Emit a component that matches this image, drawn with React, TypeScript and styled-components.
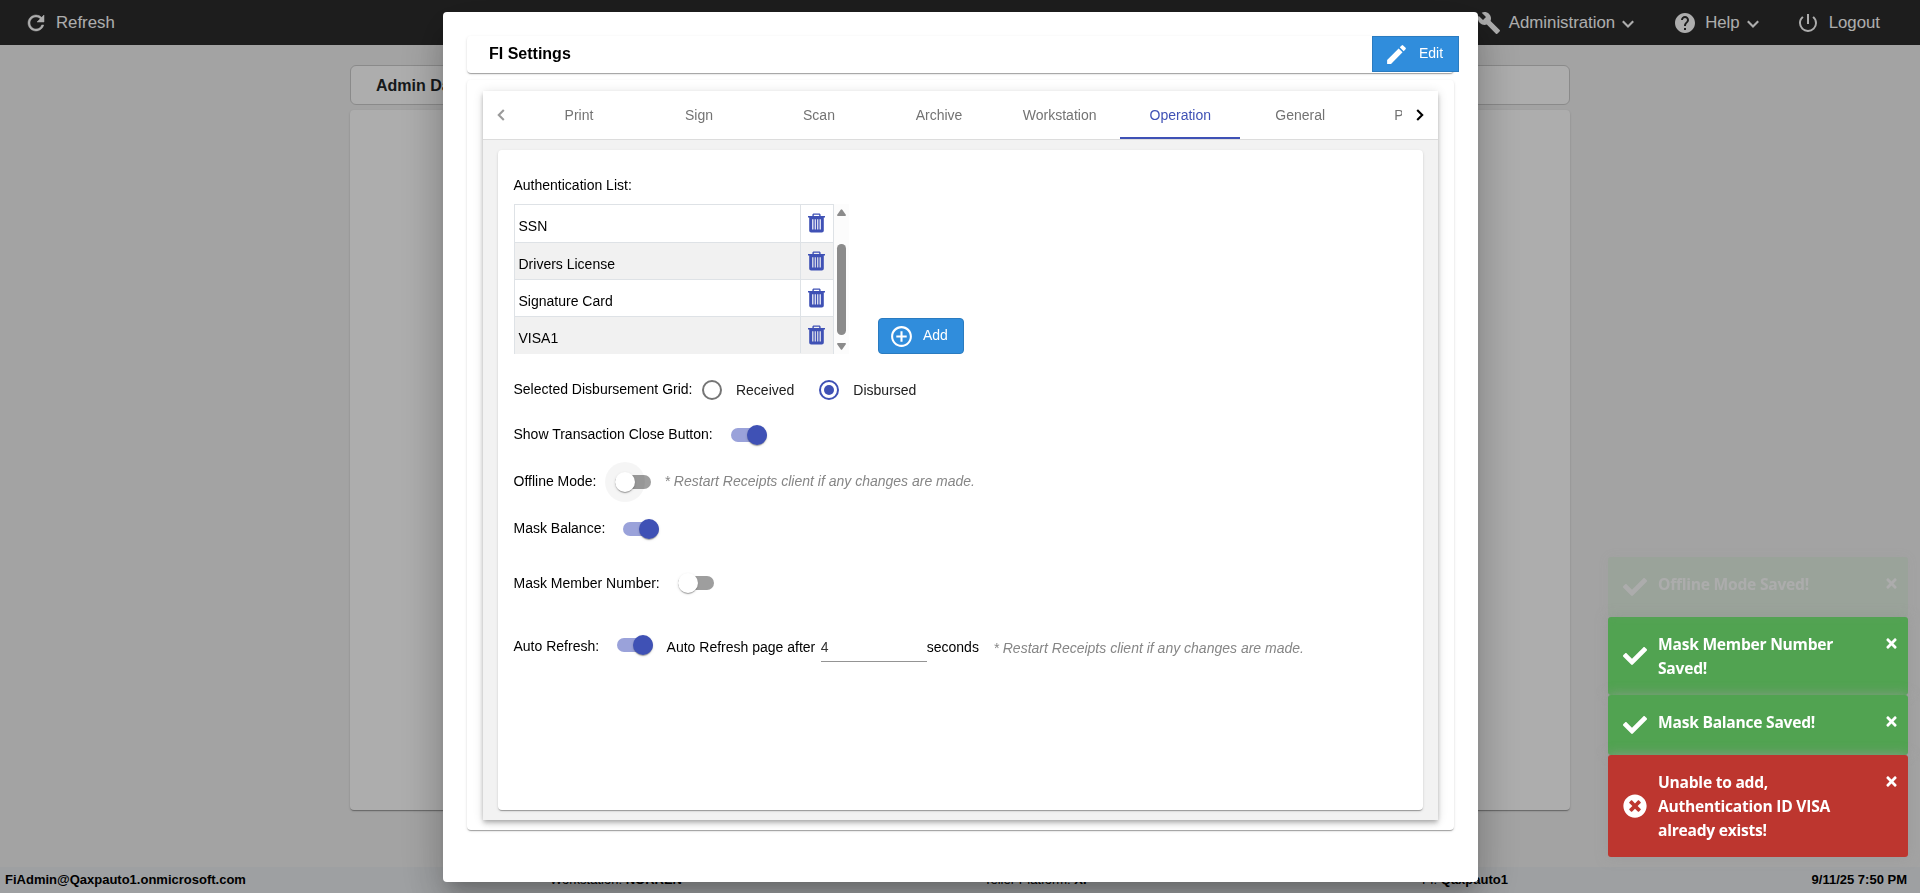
import React from 'react';
import styled, { createGlobalStyle, css } from 'styled-components';
import { FaCheck, FaTimes, FaTimesCircle } from 'react-icons/fa';
import {
  MdAddCircleOutline,
  MdBuild,
  MdEdit,
  MdHelp,
  MdPowerSettingsNew,
  MdRefresh,
} from 'react-icons/md';

const Colors = {
  bar: '#2c2c2c',
  page: '#f1f1f1',
  primary: '#3f51b5',
  button: '#308ddc',
  buttonBorder: '#2a7bc0',
  tableBorder: '#dee2e6',
  success: '#51a351',
  error: '#bd362f',
  hint: '#868686',
};

const cardShadow = css`
  box-shadow: 0 2px 1px -1px rgba(0, 0, 0, 0.2), 0 1px 1px 0 rgba(0, 0, 0, 0.14),
    0 1px 3px 0 rgba(0, 0, 0, 0.12);
`;

const GlobalStyle = createGlobalStyle`
  * {
    box-sizing: border-box;
  }
  body {
    margin: 0;
    overflow: hidden;
    font-family: Arial, 'Liberation Sans', sans-serif;
    font-size: 14px;
    color: #000;
  }
  svg {
    display: block;
    flex: none;
  }
`;

const Page = styled.div`
  display: flex;
  flex-direction: column;
  height: 100vh;
  background: ${Colors.page};
`;

const TopBar = styled.nav`
  display: flex;
  align-items: center;
  flex: none;
  height: 45px;
  padding: 0 40px 0 24px;
  background: ${Colors.bar};
  color: #fff;
  font-size: 16.8px;
`;

const NavItem = styled.div<{ $gap: number; $right?: number }>`
  display: flex;
  align-items: center;
  gap: ${({ $gap }) => $gap}px;
  margin-right: ${({ $right }) => $right || 0}px;
`;

const RefreshIcon = styled(MdRefresh)`
  stroke: none;

  path:last-child {
    stroke: currentColor;
    stroke-width: 0.5px;
  }
`;

const Spacer = styled.div`
  flex: 1;
`;

const NavChevron = styled.svg`
  width: 12px;
  height: 8px;
  margin: 2px 0 0 -1px;
`;

const Main = styled.main`
  display: flex;
  flex-direction: column;
  gap: 5px;
  flex: 1;
  width: 1220px;
  margin: 20px auto 57px;
`;

const PageTitle = styled.div`
  display: flex;
  align-items: center;
  height: 40px;
  padding: 2px 0 0 25px;
  border: 1px solid #ccc;
  border-radius: 6px;
  background: #fff;
  font-size: 16px;
  font-weight: bold;
  color: #212529;
`;

const PageCard = styled.div`
  flex: 1;
  border-radius: 4px;
  background: #fff;
  ${cardShadow}
`;

const Footer = styled.footer`
  display: grid;
  grid-template-columns: 545px 434px 438px 1fr auto;
  align-items: center;
  flex: none;
  height: 26px;
  padding: 0 13px 2px 5px;
  background: #e9ecef;
  font-size: 13px;
`;

const Overlay = styled.div`
  position: fixed;
  inset: 0;
  padding: 12px 0 0 443px;
  background: rgba(0, 0, 0, 0.32);
`;

const Dialog = styled.div`
  width: 1035px;
  height: 870px;
  padding: 24px;
  border-radius: 4px;
  background: #fff;
  box-shadow: 0 11px 15px -7px rgba(0, 0, 0, 0.2),
    0 24px 38px 3px rgba(0, 0, 0, 0.14), 0 9px 46px 8px rgba(0, 0, 0, 0.12);
`;

const DialogHeader = styled.div`
  display: flex;
  align-items: flex-start;
  justify-content: space-between;
  height: 37px;
  margin-bottom: 7px;
  padding-left: 22px;
  border-radius: 4px;
  ${cardShadow}
`;

const DialogTitle = styled.h1`
  margin: 0;
  font-size: 16px;
  line-height: 35px;
`;

const Button = styled.button<{ $square?: boolean }>`
  display: flex;
  align-items: center;
  height: 36px;
  padding: 0;
  border: 1px solid ${Colors.buttonBorder};
  border-radius: ${({ $square }) => ($square ? 0 : 4)}px;
  background: ${Colors.button};
  color: #fff;
  font-family: inherit;
  font-size: 14px;
`;

const EditButton = styled(Button)`
  width: 87px;
  margin-right: -5px;
  padding: 0 0 0 11px;
  gap: 10px;

  span {
    margin-bottom: 2px;
  }
`;

const AddButton = styled(Button)`
  width: 86px;
  padding-left: 10px;
  gap: 9px;

  span {
    margin-bottom: 3px;
  }
`;

const DialogBody = styled.div`
  height: 750px;
  padding: 11px 16px 10px;
  border-radius: 4px;
  ${cardShadow}
`;

const TabPanel = styled.div`
  height: 729px;
  background: #f2f2f2;
  box-shadow: 0 2px 4px -1px rgba(0, 0, 0, 0.2), 0 4px 5px 0 rgba(0, 0, 0, 0.14),
    0 1px 10px 0 rgba(0, 0, 0, 0.12);
`;

const TabHeader = styled.div`
  display: flex;
  height: 49px;
  border-bottom: 1px solid #dcdcdc;
  background: #fff;
`;

const Paginator = styled.div<{ $disabled?: boolean }>`
  display: flex;
  align-items: center;
  justify-content: center;
  flex: none;
  width: 36px;
  color: ${({ $disabled }) => ($disabled ? '#9a9a9a' : '#000')};
`;

const TabStrip = styled.div`
  display: flex;
  flex: 1;
  overflow: hidden;
`;

const Tab = styled.div<{ $active?: boolean }>`
  display: flex;
  align-items: center;
  justify-content: center;
  flex: none;
  min-width: 120px;
  height: 48px;
  padding: 2px 23.8px 0;
  border-bottom: 2px solid
    ${({ $active }) => ($active ? Colors.primary : 'transparent')};
  color: ${({ $active }) => ($active ? Colors.primary : '#737373')};
`;

const CutTab = styled(Tab)`
  justify-content: flex-start;
  padding: 2px 0 0 34px;
`;

const Card = styled.div`
  height: 660px;
  margin: 10px 15px;
  padding: 26px 15.5px;
  border-radius: 4px;
  background: #fff;
  ${cardShadow}
`;

const ListLabel = styled.div`
  height: 18px;
  margin-bottom: 10px;
  line-height: 18px;
`;

const ListArea = styled.div`
  display: flex;
  align-items: flex-end;
  gap: 29px;
  margin: 0 0 16px 0.5px;
`;

const ListScroller = styled.div`
  display: flex;
  width: 335px;
  height: 150px;
  overflow: hidden;
`;

const Table = styled.div`
  width: 320px;
  border: 1px solid ${Colors.tableBorder};
  border-bottom: none;
`;

const NameCell = styled.div`
  display: flex;
  align-items: flex-end;
  padding: 0 0 7px 3.5px;
  border-right: 1px solid ${Colors.tableBorder};
`;

const IconCell = styled.div`
  display: flex;
  justify-content: center;
  align-items: flex-end;
  padding: 0 1px 8px 0;
  color: ${Colors.primary};
`;

const TableRow = styled.div`
  display: grid;
  grid-template-columns: 1fr 32px;
  height: 37px;
  border-bottom: 1px solid ${Colors.tableBorder};

  &:first-child {
    height: 38px;
  }
  &:first-child ${NameCell} {
    padding-bottom: 8px;
  }
  &:first-child ${IconCell} {
    padding-bottom: 9px;
  }
  &:last-child {
    border-bottom-color: transparent;
  }
  &:nth-child(even) {
    background: #f1f1f1;
  }
`;

const ScrollTrack = styled.div`
  display: flex;
  flex-direction: column;
  align-items: center;
  justify-content: space-between;
  width: 15px;
  padding: 5px 0 4px;
  background: #fcfcfc;
`;

const ScrollThumb = styled.div`
  width: 9px;
  height: 91px;
  margin-top: 20px;
  border-radius: 5px;
  background: #8b8b8b;
`;

const Row = styled.div<{ $height?: number; $space: number }>`
  display: flex;
  align-items: center;
  height: ${({ $height }) => $height || 30}px;
  margin-bottom: ${({ $space }) => $space}px;
`;

const Label = styled.span<{ $gap?: number; $lift?: number }>`
  margin-right: ${({ $gap = 18 }) => $gap}px;
  margin-bottom: ${({ $lift = 3 }) => $lift}px;
  white-space: nowrap;
`;

const Radio = styled.span<{ $checked?: boolean }>`
  display: flex;
  align-items: center;
  justify-content: center;
  width: 20px;
  height: 20px;
  margin-right: 14px;
  border: 2px solid ${({ $checked }) => ($checked ? Colors.primary : '#757575')};
  border-radius: 50%;

  &::after {
    content: '';
    width: 10px;
    height: 10px;
    border-radius: 50%;
    background: ${({ $checked }) => ($checked ? Colors.primary : 'none')};
  }
`;

const RadioLabel = styled.span`
  margin-right: 25px;
  color: #212121;
`;

const Track = styled.span<{ $on?: boolean }>`
  display: flex;
  align-items: center;
  justify-content: ${({ $on }) => ($on ? 'flex-end' : 'flex-start')};
  flex: none;
  width: 36px;
  height: 14px;
  border-radius: 8px;
  background: ${({ $on }) => ($on ? '#9aa2da' : '#9e9e9e')};
`;

const Thumb = styled.span<{ $on?: boolean; $ripple?: boolean }>`
  flex: none;
  width: 20px;
  height: 20px;
  border-radius: 50%;
  background: ${({ $on }) => ($on ? Colors.primary : '#fff')};
  box-shadow: 0 2px 1px -1px rgba(0, 0, 0, 0.2), 0 1px 1px 0 rgba(0, 0, 0, 0.14),
    0 1px 3px 0 rgba(0, 0, 0, 0.12)
    ${({ $ripple }) => $ripple && ', 0 0 0 10px rgba(0, 0, 0, 0.04)'};
`;

const Hint = styled.span<{ $left: number; $drop?: number }>`
  margin-left: ${({ $left }) => $left}px;
  margin-top: ${({ $drop }) => $drop || 0}px;
  color: ${Colors.hint};
  font-style: italic;
  white-space: nowrap;
`;

const After = styled.span`
  margin: 4px 5.5px 0 14px;
`;

const SecondsInput = styled.input`
  width: 106px;
  height: 27px;
  margin-top: 6px;
  padding: 0 0 1px;
  border: none;
  border-bottom: 1px solid #949494;
  background: none;
  font: inherit;
  color: #333;
`;

const Unit = styled.span`
  margin-top: 4px;
`;

const ToastStack = styled.div`
  position: fixed;
  right: 12px;
  bottom: 36px;
  width: 300px;
`;

const ToastBox = styled.div<{ $error?: boolean; $fading?: boolean; $height: number }>`
  display: flex;
  height: ${({ $height }) => $height}px;
  padding: 15px 9px 15px 15px;
  border-radius: 3px;
  background: ${({ $error }) => ($error ? Colors.error : Colors.success)};
  opacity: ${({ $fading }) => ($fading ? 0.1 : 1)};
  box-shadow: 0 0 12px rgba(153, 153, 153, 0.8);
  color: #fff;
  font-family: 'Segoe UI', 'Open Sans', sans-serif;
  font-size: 15.6px;
  font-weight: bold;
  line-height: 24px;
`;

const ToastIcon = styled.div`
  display: flex;
  align-items: center;
  width: 35px;
  font-size: 24px;
`;

const ToastText = styled.div`
  flex: 1;
  padding-right: 40px;
  letter-spacing: -0.24px;
`;

const ToastClose = styled.div`
  padding-top: 4px;
  font-size: 15px;
`;

const Chevron = ({ flip = false }) => (
  <svg width="8" height="12" viewBox="0 0 8 12" fill="none" stroke="currentColor" strokeWidth="2.1">
    <path d={flip ? 'M1.2 1 6.2 6l-5 5' : 'M6.8 1 1.8 6l5 5'} />
  </svg>
);

const DownChevron = () => (
  <NavChevron viewBox="0 0 12 8" fill="none" stroke="currentColor" strokeWidth="2.1">
    <path d="m.8 1.2 5.2 5.2 5.2-5.2" />
  </NavChevron>
);

const TrashIcon = () => (
  <svg width="17" height="20" viewBox="0 0 17 20" fill="currentColor">
    <path
      fillRule="evenodd"
      d="M0 3h4.4V2C4.4 1 5 .5 5.900.5h5.200c.9 0 1.500.5 1.500 1.500v1H17v1.500h-1.200v13c0 1.200-.8 2-2 2H3.200c-1.200 0-2-.8-2-2v-13H0zM5.800 3h5.400V1.800H5.800zM4.200 6.300v10.200h1.200V6.300zm2.500 0v10.200h1.100V6.300zm2.500 0v10.200h1.100V6.300zm2.400 0v10.200h1.200V6.300z"
    />
  </svg>
);

const Toggle = ({ on = false, ripple = false }) => (
  <Track $on={on}>
    <Thumb $on={on} $ripple={ripple} />
  </Track>
);

const Toast = ({ text, height, error = false, fading = false }) => (
  <ToastBox $height={height} $error={error} $fading={fading}>
    <ToastIcon>{error ? <FaTimesCircle /> : <FaCheck />}</ToastIcon>
    <ToastText>{text}</ToastText>
    <ToastClose>
      <FaTimes />
    </ToastClose>
  </ToastBox>
);

const tabs = ['Print', 'Sign', 'Scan', 'Archive', 'Workstation', 'Operation', 'General'];
const authList = ['SSN', 'Drivers License', 'Signature Card', 'VISA1'];
const restartHint = '* Restart Receipts client if any changes are made.';

const Background = () => (
  <Page>
    <TopBar>
      <NavItem $gap={8}>
        <RefreshIcon size={24} />
        Refresh
      </NavItem>
      <Spacer />
      <NavItem $gap={8} $right={39}>
        <MdBuild size={24} />
        <span>Administration</span>
        <DownChevron />
      </NavItem>
      <NavItem $gap={8} $right={37}>
        <MdHelp size={24} />
        Help
        <DownChevron />
      </NavItem>
      <NavItem $gap={9}>
        <MdPowerSettingsNew size={24} />
        Logout
      </NavItem>
    </TopBar>
    <Main>
      <PageTitle>Admin Dashboard</PageTitle>
      <PageCard />
    </Main>
    <Footer>
      <b>FiAdmin@Qaxpauto1.onmicrosoft.com</b>
      <span>
        Workstation: <b>NORREN</b>
      </span>
      <span>
        Teller Platform: <b>XP</b>
      </span>
      <span>
        FI: <b>Qaxpauto1</b>
      </span>
      <b>9/11/25 7:50 PM</b>
    </Footer>
  </Page>
);

const AuthenticationList = () => (
  <>
    <ListLabel>Authentication List:</ListLabel>
    <ListArea>
      <ListScroller>
        <Table>
          {authList.map(name => (
            <TableRow key={name}>
              <NameCell>{name}</NameCell>
              <IconCell>
                <TrashIcon />
              </IconCell>
            </TableRow>
          ))}
        </Table>
        <ScrollTrack>
          <svg width="9" height="7" fill="#8b8b8b">
            <path d="M3.700.8Q4.500-.4 5.300.8L9 6q0 1-1 1H1Q0 7 0 6z" />
          </svg>
          <ScrollThumb />
          <svg width="9" height="7" fill="#8b8b8b">
            <path d="M3.700 6.200Q4.500 7.400 5.300 6.200L9 1q0-1-1-1H1Q0 0 0 1z" />
          </svg>
        </ScrollTrack>
      </ListScroller>
      <AddButton>
        <MdAddCircleOutline size={25} />
        <span>Add</span>
      </AddButton>
    </ListArea>
  </>
);

const OperationSettings = () => (
  <Card>
    <AuthenticationList />
    <Row $height={40} $space={10}>
      <Label $gap={9.5}>Selected Disbursement Grid:</Label>
      <Radio />
      <RadioLabel>Received</RadioLabel>
      <Radio $checked />
      <RadioLabel>Disbursed</RadioLabel>
    </Row>
    <Row $space={12}>
      <Label>Show Transaction Close Button:</Label>
      <Toggle on />
    </Row>
    <Row $height={40} $space={12}>
      <Label>Offline Mode:</Label>
      <Toggle ripple />
      <Hint $left={14} $drop={-2}>
        {restartHint}
      </Hint>
    </Row>
    <Row $space={24}>
      <Label>Mask Balance:</Label>
      <Toggle on />
    </Row>
    <Row $space={32}>
      <Label $lift={1}>Mask Member Number:</Label>
      <Toggle />
    </Row>
    <Row $space={0}>
      <Label $gap={17.5} $lift={-1}>
        Auto Refresh:
      </Label>
      <Toggle on />
      <After>Auto Refresh page after</After>
      <SecondsInput defaultValue="4" />
      <Unit>seconds</Unit>
      <Hint $left={14.5} $drop={6}>
        {restartHint}
      </Hint>
    </Row>
  </Card>
);

const App = () => (
  <>
    <GlobalStyle />
    <Background />
    <Overlay>
      <Dialog>
        <DialogHeader>
          <DialogTitle>FI Settings</DialogTitle>
          <EditButton $square>
            <MdEdit size={25} />
            <span>Edit</span>
          </EditButton>
        </DialogHeader>
        <DialogBody>
          <TabPanel>
            <TabHeader>
              <Paginator $disabled>
                <Chevron />
              </Paginator>
              <TabStrip>
                {tabs.map(tab => (
                  <Tab key={tab} $active={tab === 'Operation'}>
                    {tab}
                  </Tab>
                ))}
                <CutTab>P</CutTab>
              </TabStrip>
              <Paginator>
                <Chevron flip />
              </Paginator>
            </TabHeader>
            <OperationSettings />
          </TabPanel>
        </DialogBody>
      </Dialog>
    </Overlay>
    <ToastStack>
      <Toast text="Offline Mode Saved!" height={60} fading />
      <Toast text="Mask Member Number Saved!" height={78} />
      <Toast text="Mask Balance Saved!" height={60} />
      <Toast text="Unable to add, Authentication ID VISA already exists!" height={102} error />
    </ToastStack>
  </>
);

export default App;
